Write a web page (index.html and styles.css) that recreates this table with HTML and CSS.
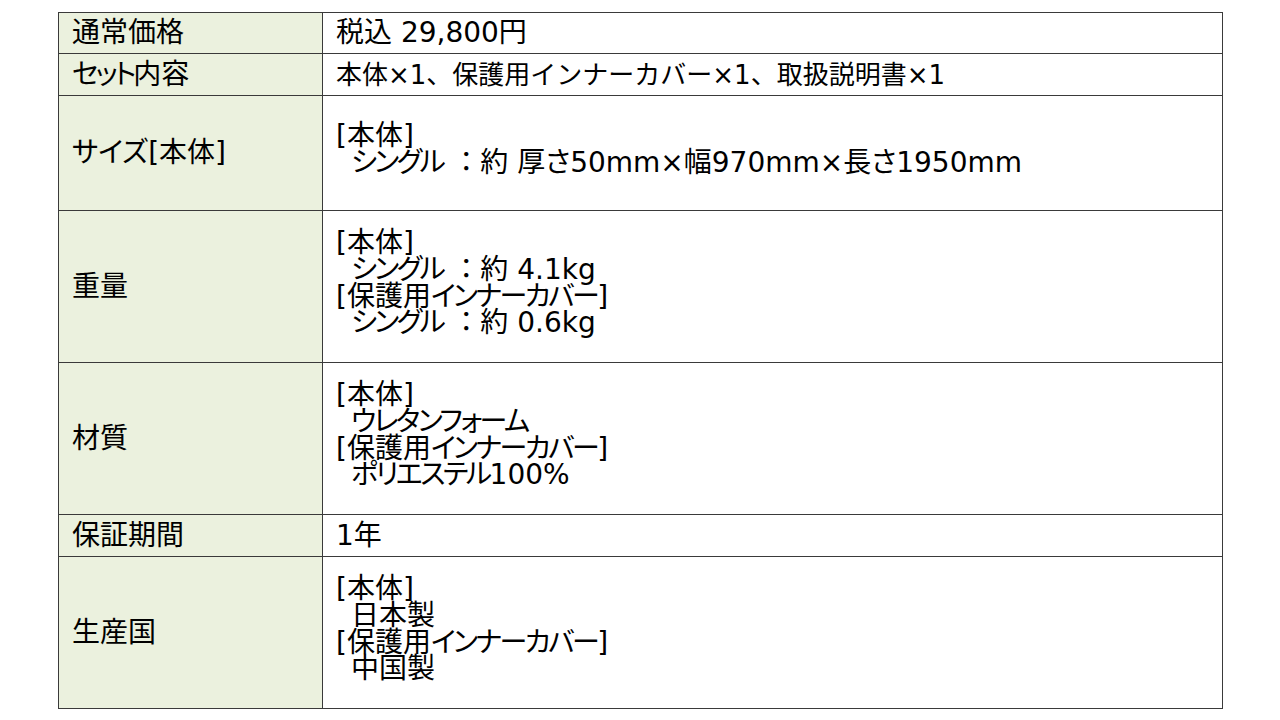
FILE: index.html
```html
<!DOCTYPE html>
<html lang="ja">
<head>
<meta charset="utf-8">
<link rel="stylesheet" href="styles.css">
</head>
<body>
<table class="spec">
  <tr class="r1">
    <th class="label">通常価格</th>
    <td class="val big">税込 29,800円</td>
  </tr>
  <tr class="r2">
    <th class="label"><span class="kana">セット</span>内容</th>
    <td class="val">本体×1、保護用インナーカバー×1、取扱説明書×1</td>
  </tr>
  <tr class="r3">
    <th class="label">サイズ[本体]</th>
    <td class="val multi">
      <div class="ln">[本体]</div>
      <div class="ln ind"><span class="kana">シングル</span> <span class="colon">：</span>約 厚さ50mm×幅970mm×長さ1950mm</div>
    </td>
  </tr>
  <tr class="r4">
    <th class="label">重量</th>
    <td class="val multi">
      <div class="ln">[本体]</div>
      <div class="ln ind"><span class="kana">シングル</span> <span class="colon">：</span>約 4.1kg</div>
      <div class="ln">[保護用<span class="kana">インナーカバー</span>]</div>
      <div class="ln ind"><span class="kana">シングル</span> <span class="colon">：</span>約 0.6kg</div>
    </td>
  </tr>
  <tr class="r5">
    <th class="label">材質</th>
    <td class="val multi">
      <div class="ln">[本体]</div>
      <div class="ln ind"><span class="kana">ウレタンフォーム</span></div>
      <div class="ln">[保護用<span class="kana">インナーカバー</span>]</div>
      <div class="ln ind"><span class="kana">ポリエステル</span>100%</div>
    </td>
  </tr>
  <tr class="r6">
    <th class="label">保証期間</th>
    <td class="val big">1年</td>
  </tr>
  <tr class="r7">
    <th class="label">生産国</th>
    <td class="val multi">
      <div class="ln">[本体]</div>
      <div class="ln ind">日本製</div>
      <div class="ln">[保護用<span class="kana">インナーカバー</span>]</div>
      <div class="ln ind">中国製</div>
    </td>
  </tr>
</table>
</body>
</html>
```

FILE: styles.css
```css
html, body {
  margin: 0;
  padding: 0;
  background: #ffffff;
}

body {
  font-family: "DejaVu Sans", "Noto Sans CJK JP", sans-serif;
  color: #000000;
}

.spec {
  margin: 12px 0 0 58px;
  width: 1165px;
  border-collapse: collapse;
  table-layout: fixed;
}

.spec th,
.spec td {
  border: 1px solid #3a3a3a;
  vertical-align: middle;
  text-align: left;
  font-weight: normal;
  line-height: 30px;
  white-space: nowrap;
}

.spec .label {
  width: 250px;
  padding: 0 0 0 13px;
  background: #ebf1de;
  font-size: 28px;
  font-feature-settings: "palt" 1;
}

.spec .label .kana {
  letter-spacing: -3px;
}

.spec .val {
  padding: 0 0 0 13px;
  font-size: 26px;
}

.spec .big {
  font-size: 28px;
}

.spec .multi {
  padding-bottom: 6px;
  font-size: 28px;
  font-feature-settings: "palt" 1;
}

.multi .kana {
  letter-spacing: -2.5px;
}

.ln {
  line-height: 26.7px;
}

.ind {
  padding-left: 15px;
}

.colon {
  font-feature-settings: "palt" 0;
}

.r1 { height: 41px; }
.r2 { height: 42px; }
.r3 { height: 115px; }
.r4 { height: 152px; }
.r5 { height: 152px; }
.r6 { height: 42px; }
.r7 { height: 152px; }
```
